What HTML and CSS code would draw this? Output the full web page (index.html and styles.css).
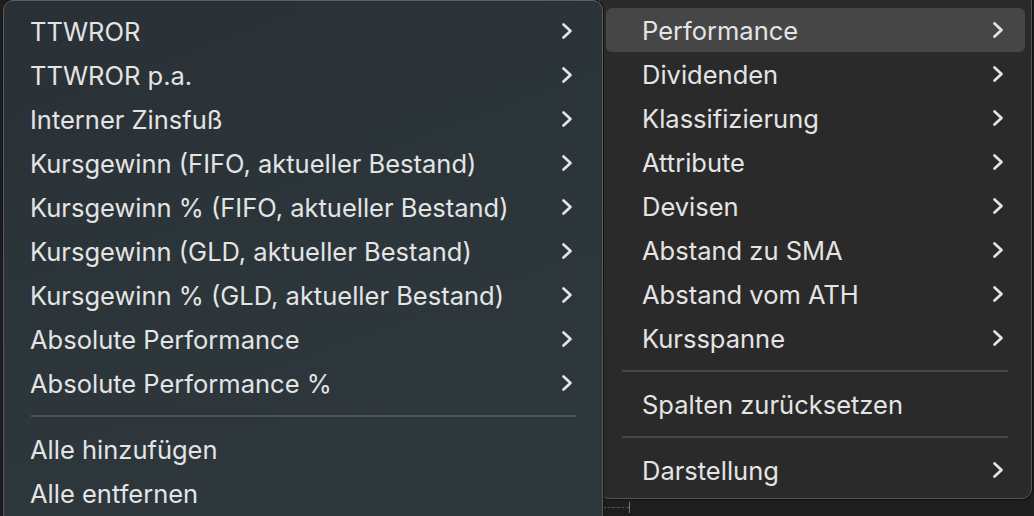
FILE: index.html
```html
<!DOCTYPE html>
<html lang="de">
<head>
    <meta charset="UTF-8">
    <meta name="viewport" content="width=device-width, initial-scale=1.0">
    <title>Spalten</title>
    <link rel="stylesheet" href="styles.css">
</head>
<body>
    <div class="screen">
        <!-- Untermenü "Performance" -->
        <div class="menu menu-sub">
            <div class="item"><span>TTWROR</span><svg class="chev" viewBox="0 0 12 18"><path d="M2.5 2.5 L9.5 9 L2.5 15.5"/></svg></div>
            <div class="item"><span>TTWROR p.a.</span><svg class="chev" viewBox="0 0 12 18"><path d="M2.5 2.5 L9.5 9 L2.5 15.5"/></svg></div>
            <div class="item"><span>Interner Zinsfuß</span><svg class="chev" viewBox="0 0 12 18"><path d="M2.5 2.5 L9.5 9 L2.5 15.5"/></svg></div>
            <div class="item"><span>Kursgewinn (FIFO, aktueller Bestand)</span><svg class="chev" viewBox="0 0 12 18"><path d="M2.5 2.5 L9.5 9 L2.5 15.5"/></svg></div>
            <div class="item"><span>Kursgewinn % (FIFO, aktueller Bestand)</span><svg class="chev" viewBox="0 0 12 18"><path d="M2.5 2.5 L9.5 9 L2.5 15.5"/></svg></div>
            <div class="item"><span>Kursgewinn (GLD, aktueller Bestand)</span><svg class="chev" viewBox="0 0 12 18"><path d="M2.5 2.5 L9.5 9 L2.5 15.5"/></svg></div>
            <div class="item"><span>Kursgewinn % (GLD, aktueller Bestand)</span><svg class="chev" viewBox="0 0 12 18"><path d="M2.5 2.5 L9.5 9 L2.5 15.5"/></svg></div>
            <div class="item"><span>Absolute Performance</span><svg class="chev" viewBox="0 0 12 18"><path d="M2.5 2.5 L9.5 9 L2.5 15.5"/></svg></div>
            <div class="item"><span>Absolute Performance %</span><svg class="chev" viewBox="0 0 12 18"><path d="M2.5 2.5 L9.5 9 L2.5 15.5"/></svg></div>
            <div class="sep"></div>
            <div class="item"><span>Alle hinzufügen</span></div>
            <div class="item"><span>Alle entfernen</span></div>
        </div>

        <!-- Hauptmenü -->
        <div class="menu-col">
            <div class="menu menu-main">
                <div class="item active"><span>Performance</span><svg class="chev" viewBox="0 0 12 18"><path d="M2.5 2.5 L9.5 9 L2.5 15.5"/></svg></div>
                <div class="item"><span>Dividenden</span><svg class="chev" viewBox="0 0 12 18"><path d="M2.5 2.5 L9.5 9 L2.5 15.5"/></svg></div>
                <div class="item"><span>Klassifizierung</span><svg class="chev" viewBox="0 0 12 18"><path d="M2.5 2.5 L9.5 9 L2.5 15.5"/></svg></div>
                <div class="item"><span>Attribute</span><svg class="chev" viewBox="0 0 12 18"><path d="M2.5 2.5 L9.5 9 L2.5 15.5"/></svg></div>
                <div class="item"><span>Devisen</span><svg class="chev" viewBox="0 0 12 18"><path d="M2.5 2.5 L9.5 9 L2.5 15.5"/></svg></div>
                <div class="item"><span>Abstand zu SMA</span><svg class="chev" viewBox="0 0 12 18"><path d="M2.5 2.5 L9.5 9 L2.5 15.5"/></svg></div>
                <div class="item"><span>Abstand vom ATH</span><svg class="chev" viewBox="0 0 12 18"><path d="M2.5 2.5 L9.5 9 L2.5 15.5"/></svg></div>
                <div class="item"><span>Kursspanne</span><svg class="chev" viewBox="0 0 12 18"><path d="M2.5 2.5 L9.5 9 L2.5 15.5"/></svg></div>
                <div class="sep"></div>
                <div class="item"><span>Spalten zurücksetzen</span></div>
                <div class="sep"></div>
                <div class="item"><span>Darstellung</span><svg class="chev" viewBox="0 0 12 18"><path d="M2.5 2.5 L9.5 9 L2.5 15.5"/></svg></div>
            </div>
            <!-- Rest der Tabelle darunter -->
            <div class="backdrop">
                <span class="dash"></span>
                <span class="tick"></span>
            </div>
        </div>
    </div>
</body>
</html>
```

FILE: styles.css
```css
body {
    margin: 0;
    height: 516px;
    overflow: hidden;
    background-color: #1e1e1e;
    font-family: Inter, "Liberation Sans", sans-serif;
    color: #e4e4e4;
}
.screen {
    display: flex;
    align-items: flex-start;
    padding-left: 3px;
}
.menu {
    box-sizing: border-box;
    border-radius: 10px;
}
.menu-sub {
    position: relative;
    z-index: 2;
    width: 600px;
    padding: 8px 0 20px;
    background: linear-gradient(160deg, #2a3136 0%, #2c363b 60%, #2d383d 100%);
    border: 1px solid #596064;
    box-shadow: 0 0 0 1px #121212;
}
.menu-col {
    width: 433px;
    margin-left: -4px;
    margin-top: -12px;
}
.menu-main {
    padding: 19px 0 6px;
    background-color: #2a2a2a;
    border: 1px solid #565656;
    box-shadow: 0 0 0 1px #111;
}
.item {
    display: flex;
    align-items: center;
    justify-content: space-between;
    height: 44px;
    margin: 0 6px;
    border-radius: 6px;
    font-size: 25.5px;
}
.menu-sub .item {
    padding: 0 23px 0 20px;
}
.menu-main .item {
    padding: 0 21px 0 36px;
}
.item.active {
    background-color: #464646;
}
.chev {
    width: 12px;
    height: 18px;
    fill: none;
    stroke: #e4e4e4;
    stroke-width: 2.7;
    stroke-linecap: round;
    stroke-linejoin: round;
}
.sep {
    height: 2px;
    margin: 10px 26px 10px 27px;
    background-color: #4b5357;
}
.menu-main .sep {
    margin: 10px 23px 10px 22px;
    background-color: #474747;
}
.backdrop {
    display: flex;
    align-items: center;
    height: 16px;
    padding-left: 4px;
}
.dash {
    width: 26px;
    border-top: 1px dashed #555;
}
.tick {
    width: 1px;
    height: 11px;
    background-color: #777;
}
```
